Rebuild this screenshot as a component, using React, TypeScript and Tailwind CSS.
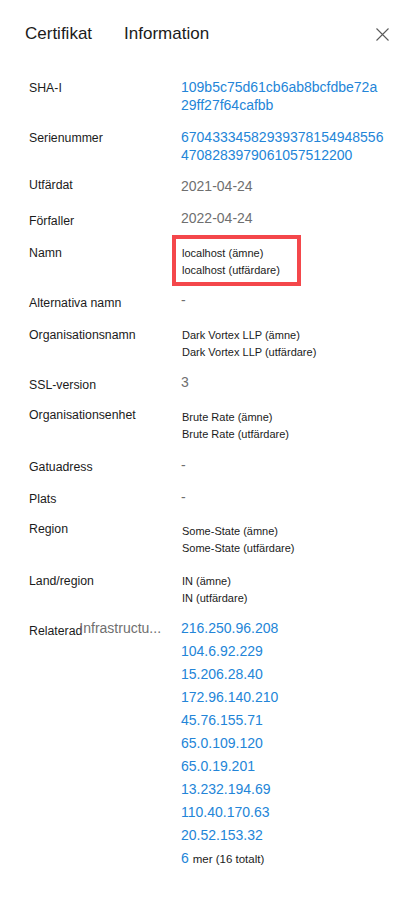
import React from 'react'

type Row = {
  label: string
  rowClass: string
  labelClass: string
  kind: 'link' | 'gray' | 'small' | 'boxed'
  lines: string[]
}

const rows: Row[] = [
  { label: 'SHA-I', rowClass: 'h-[50px]', labelClass: 'pt-[1.5px]', kind: 'link', lines: ['109b5c75d61cb6ab8bcfdbe72a', '29ff27f64cafbb'] },
  { label: 'Serienummer', rowClass: 'h-[49px]', labelClass: 'pt-[1.5px]', kind: 'link', lines: ['67043334582939378154948556', '4708283979061057512200'] },
  { label: 'Utfärdat', rowClass: 'h-[32px]', labelClass: 'pt-0', kind: 'gray', lines: ['2021-04-24'] },
  { label: 'Förfaller', rowClass: 'h-[35.5px]', labelClass: 'pt-[3.5px]', kind: 'gray', lines: ['2022-04-24'] },
  { label: 'Namn', rowClass: 'h-[46.5px]', labelClass: 'pt-0', kind: 'boxed', lines: ['localhost (ämne)', 'localhost (utfärdare)'] },
  { label: 'Alternativa namn', rowClass: 'h-[35.5px]', labelClass: 'pt-[3.5px]', kind: 'gray', lines: ['-'] },
  { label: 'Organisationsnamn', rowClass: 'h-[46.5px]', labelClass: 'pt-0', kind: 'small', lines: ['Dark Vortex LLP (ämne)', 'Dark Vortex LLP (utfärdare)'] },
  { label: 'SSL-version', rowClass: 'h-[35.5px]', labelClass: 'pt-[3.5px]', kind: 'gray', lines: ['3'] },
  { label: 'Organisationsenhet', rowClass: 'h-[47.5px]', labelClass: '-mt-[2px]', kind: 'small', lines: ['Brute Rate (ämne)', 'Brute Rate (utfärdare)'] },
  { label: 'Gatuadress', rowClass: 'h-[32px]', labelClass: 'pt-[2.5px]', kind: 'gray', lines: ['-'] },
  { label: 'Plats', rowClass: 'h-[34.5px]', labelClass: 'pt-[2.5px]', kind: 'gray', lines: ['-'] },
  { label: 'Region', rowClass: 'h-[50px]', labelClass: '-mt-[2px]', kind: 'small', lines: ['Some-State (ämne)', 'Some-State (utfärdare)'] },
  { label: 'Land/region', rowClass: 'h-[44px]', labelClass: 'pt-0', kind: 'small', lines: ['IN (ämne)', 'IN (utfärdare)'] },
]

const related = [
  '216.250.96.208',
  '104.6.92.229',
  '15.206.28.40',
  '172.96.140.210',
  '45.76.155.71',
  '65.0.109.120',
  '65.0.19.201',
  '13.232.194.69',
  '110.40.170.63',
  '20.52.153.32',
]

function Value({ row }: { row: Row }) {
  if (row.kind === 'link') {
    return (
      <div className="text-[14px] leading-[18px] text-[#2385d8]">
        {row.lines.map((l) => (
          <div key={l}>{l}</div>
        ))}
      </div>
    )
  }
  if (row.kind === 'gray') {
    return <div className="text-[14px] leading-[18px] text-[#6f6f6f]">{row.lines[0]}</div>
  }
  if (row.kind === 'boxed') {
    return (
      <div className="-ml-[9px] -mt-[9.5px] w-[129px] border-4 border-[#f4474b] pl-[6px] pt-[5.5px] pb-[3.5px] text-[11px] leading-[17px] text-[#1b1b1b]">
        {row.lines.map((l) => (
          <div key={l}>{l}</div>
        ))}
      </div>
    )
  }
  return (
    <div className="pl-px text-[11px] leading-[17px] text-[#1b1b1b]">
      {row.lines.map((l) => (
        <div key={l}>{l}</div>
      ))}
    </div>
  )
}

export default function App() {
  return (
    <div className="min-h-[905px] w-[413px] bg-white pt-[22px] font-['Liberation_Sans',Arial,sans-serif] text-[#1b1b1b]">
      {/* Header */}
      <div className="flex items-center pl-[25px] pr-[24px]">
        <span className="text-[17px] leading-[24px]">Certifikat</span>
        <span className="ml-[32px] text-[17px] leading-[24px]">Information</span>
        <button className="ml-auto flex h-[24px] w-[14px] items-center justify-center text-[#5a5a5a]">
          <svg width="13" height="13" viewBox="0 0 13 13" fill="none" stroke="currentColor" strokeWidth="1.1">
            <path d="M0.5 0.5 L12.5 12.5 M12.5 0.5 L0.5 12.5" />
          </svg>
        </button>
      </div>

      {/* Details */}
      <div className="mt-[32px] pl-[29px]">
        {rows.map((row) => (
          <div key={row.label} className={`flex items-start ${row.rowClass}`}>
            <div className={`w-[152px] shrink-0 text-[12.3px] leading-[17px] ${row.labelClass}`}>{row.label}</div>
            <Value row={row} />
          </div>
        ))}

        <div className="flex items-start">
          <div className="flex w-[152px] shrink-0 items-start">
            <span className="pt-[6px] text-[12.3px] leading-[17px]">Relaterad</span>
            <span className="-ml-[3px] text-[14px] leading-[23px] text-[#6f6f6f]">Infrastructu...</span>
          </div>
          <div className="text-[14px] leading-[23px] text-[#2385d8]">
            {related.map((ip) => (
              <div key={ip}>{ip}</div>
            ))}
            <div>
              6 <span className="text-[11.5px] text-[#1b1b1b]">mer (16 totalt)</span>
            </div>
          </div>
        </div>
      </div>
    </div>
  )
}
